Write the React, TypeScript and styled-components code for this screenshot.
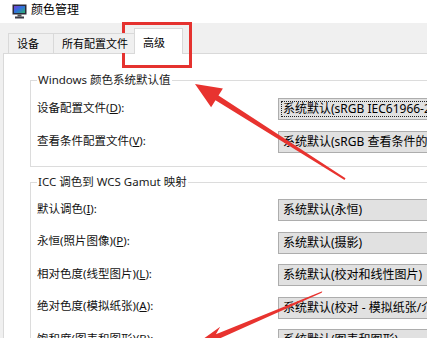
import styled, { createGlobalStyle, css } from "styled-components";

const GlobalStyle = createGlobalStyle`
  html, body {
    margin: 0;
    padding: 0;
    background: #fff;
  }
`;

const FONT = `"Noto Sans", "Noto Sans CJK SC", sans-serif`;

const Window = styled.div`
  position: relative;
  width: 427px;
  height: 338px;
  overflow: hidden;
  background: #f0f0f0;
  font-family: ${FONT};
  font-size: 11.5px;
  color: #000;
`;

const TitleBar = styled.div`
  height: 23px;
  background: #fff;
  display: flex;
  align-items: center;
  gap: 4px;
  padding-left: 12px;
  box-sizing: border-box;
`;

const Title = styled.span`
  font-size: 12px;
  line-height: 14px;
  margin-top: -3px;
`;

const Body = styled.div`
  padding-left: 3px;
`;

const TabStrip = styled.div`
  position: relative;
  z-index: 1;
  height: 30px;
  display: flex;
  align-items: flex-end;
  padding-left: 6px;
`;

const Tab = styled.div<{ $active?: boolean; $minWidth?: number }>`
  box-sizing: border-box;
  display: flex;
  align-items: center;
  min-width: ${({ $minWidth }) => ($minWidth ? `${$minWidth}px` : "auto")};
  padding: 0 7px 0 8px;
  border: 1px solid #d9d9d9;
  border-bottom: none;
  font-size: 11px;
  line-height: 14px;
  margin-left: -1px;
  ${({ $active }) =>
    $active
      ? css`
          height: 26px;
          margin-bottom: -1px;
          margin-left: -2px;
          padding-top: 2px;
          background: #fff;
          position: relative;
        `
      : css`
          height: 20px;
          background: #f0f0f0;
        `}
`;

const TabPage = styled.div`
  width: 600px;
  height: 300px;
  background: #fff;
  border-top: 1px solid #d9d9d9;
  border-left: 1px solid #d9d9d9;
  padding: 18px 0 0 26px;
  box-sizing: border-box;
`;

const Group = styled.fieldset<{ $gap: number; $spaced?: boolean }>`
  margin: ${({ $spaced }) => ($spaced ? "7px" : "0")} 0 0 0;
  border: 1px solid #dcdcdc;
  padding: ${({ $spaced }) => ($spaced ? 9 : 10)}px 0 13px 6px;
  display: flex;
  flex-direction: column;
  gap: ${({ $gap }) => $gap}px;
`;

const Legend = styled.legend`
  padding: 0 1px;
  line-height: 16px;
  color: #1a1a1a;
`;

const Row = styled.div`
  display: grid;
  grid-template-columns: 241px 200px;
  align-items: center;
  height: 22px;
`;

const Label = styled.span`
  line-height: 16px;
  margin-top: -3px;
  color: #111;
`;

const Key = styled.span`
  text-decoration: underline;
  text-underline-offset: 1px;
`;

const Combo = styled.div<{ $focused?: boolean }>`
  position: relative;
  box-sizing: border-box;
  height: 22px;
  display: flex;
  align-items: center;
  padding-left: 4px;
  border: 1px solid #adadad;
  background: #e1e1e1;
  font-size: 12px;
  white-space: nowrap;
  overflow: hidden;
  line-height: 14px;
  ${({ $focused }) =>
    $focused &&
    css`
      &::after {
        content: "";
        position: absolute;
        inset: 2px;
        border: 1px dotted #222;
      }
    `}
`;

const Overlay = styled.svg`
  position: absolute;
  left: 0;
  top: 0;
  pointer-events: none;
`;

type Item = { label: string; key: string; tail: string; value: string; focused?: boolean };

const defaults: Item[] = [
  { label: "设备配置文件(", key: "D", tail: "):", value: "系统默认(sRGB IEC61966-2.1)", focused: true },
  { label: "查看条件配置文件(", key: "V", tail: "):", value: "系统默认(sRGB 查看条件的 Windows 颜色系统)" },
];

const mapping: Item[] = [
  { label: "默认调色(", key: "I", tail: "):", value: "系统默认(永恒)" },
  { label: "永恒(照片图像)(", key: "P", tail: "):", value: "系统默认(摄影)" },
  { label: "相对色度(线型图片)(", key: "L", tail: "):", value: "系统默认(校对和线性图片)" },
  { label: "绝对色度(模拟纸张)(", key: "A", tail: "):", value: "系统默认(校对 - 模拟纸张/介质)" },
  { label: "饱和度(图表和图形)(", key: "B", tail: "):", value: "系统默认(图表和图形)" },
];

const renderRows = (items: Item[]) =>
  items.map((it) => (
    <Row key={it.key}>
      <Label>
        {it.label}
        <Key>{it.key}</Key>
        {it.tail}
      </Label>
      <Combo $focused={it.focused}>{it.value}</Combo>
    </Row>
  ));

const MonitorIcon = () => (
  <svg width="15" height="15" viewBox="0 0 15 15">
    <defs>
      <linearGradient id="scr" x1="0" y1="0" x2="1" y2="1">
        <stop offset="0" stopColor="#7b3fd1" />
        <stop offset="0.45" stopColor="#2f6fe0" />
        <stop offset="1" stopColor="#2fb36a" />
      </linearGradient>
    </defs>
    <rect x="0.5" y="0.5" width="14" height="10" fill="#2a2a3a" />
    <rect x="2" y="2" width="11" height="7" fill="url(#scr)" />
    <rect x="5.5" y="10.5" width="4" height="2" fill="#555" />
    <rect x="3" y="12.5" width="9" height="2" fill="#3a3a46" />
  </svg>
);

export default function App() {
  return (
    <>
      <GlobalStyle />
      <Window>
        <TitleBar>
          <MonitorIcon />
          <Title>颜色管理</Title>
        </TitleBar>
        <Body>
          <TabStrip>
            <Tab $minWidth={46}>设备</Tab>
            <Tab>所有配置文件</Tab>
            <Tab $active $minWidth={49}>
              高级
            </Tab>
          </TabStrip>
          <TabPage>
            <Group $gap={11}>
              <Legend>Windows 颜色系统默认值</Legend>
              {renderRows(defaults)}
            </Group>
            <Group $gap={10.5} $spaced>
              <Legend>ICC 调色到 WCS Gamut 映射</Legend>
              {renderRows(mapping)}
            </Group>
          </TabPage>
        </Body>
        <Overlay width="427" height="338" viewBox="0 0 427 338">
          <rect x="123.5" y="23.5" width="67" height="43" fill="none" stroke="#e5322f" strokeWidth="3" />
          <polygon
            fill="#e8332f"
            points="195,84 222.9,88.6 218.5,95.5 345.5,178.2 344.5,179.9 215.5,100.3 211.1,107.2"
          />
          <polygon
            fill="#e8332f"
            points="192,347 220.2,326.7 215.9,334.2 322.3,291.3 321.7,292.7 217.6,339.4 211.6,346.9"
          />
        </Overlay>
      </Window>
    </>
  );
}
